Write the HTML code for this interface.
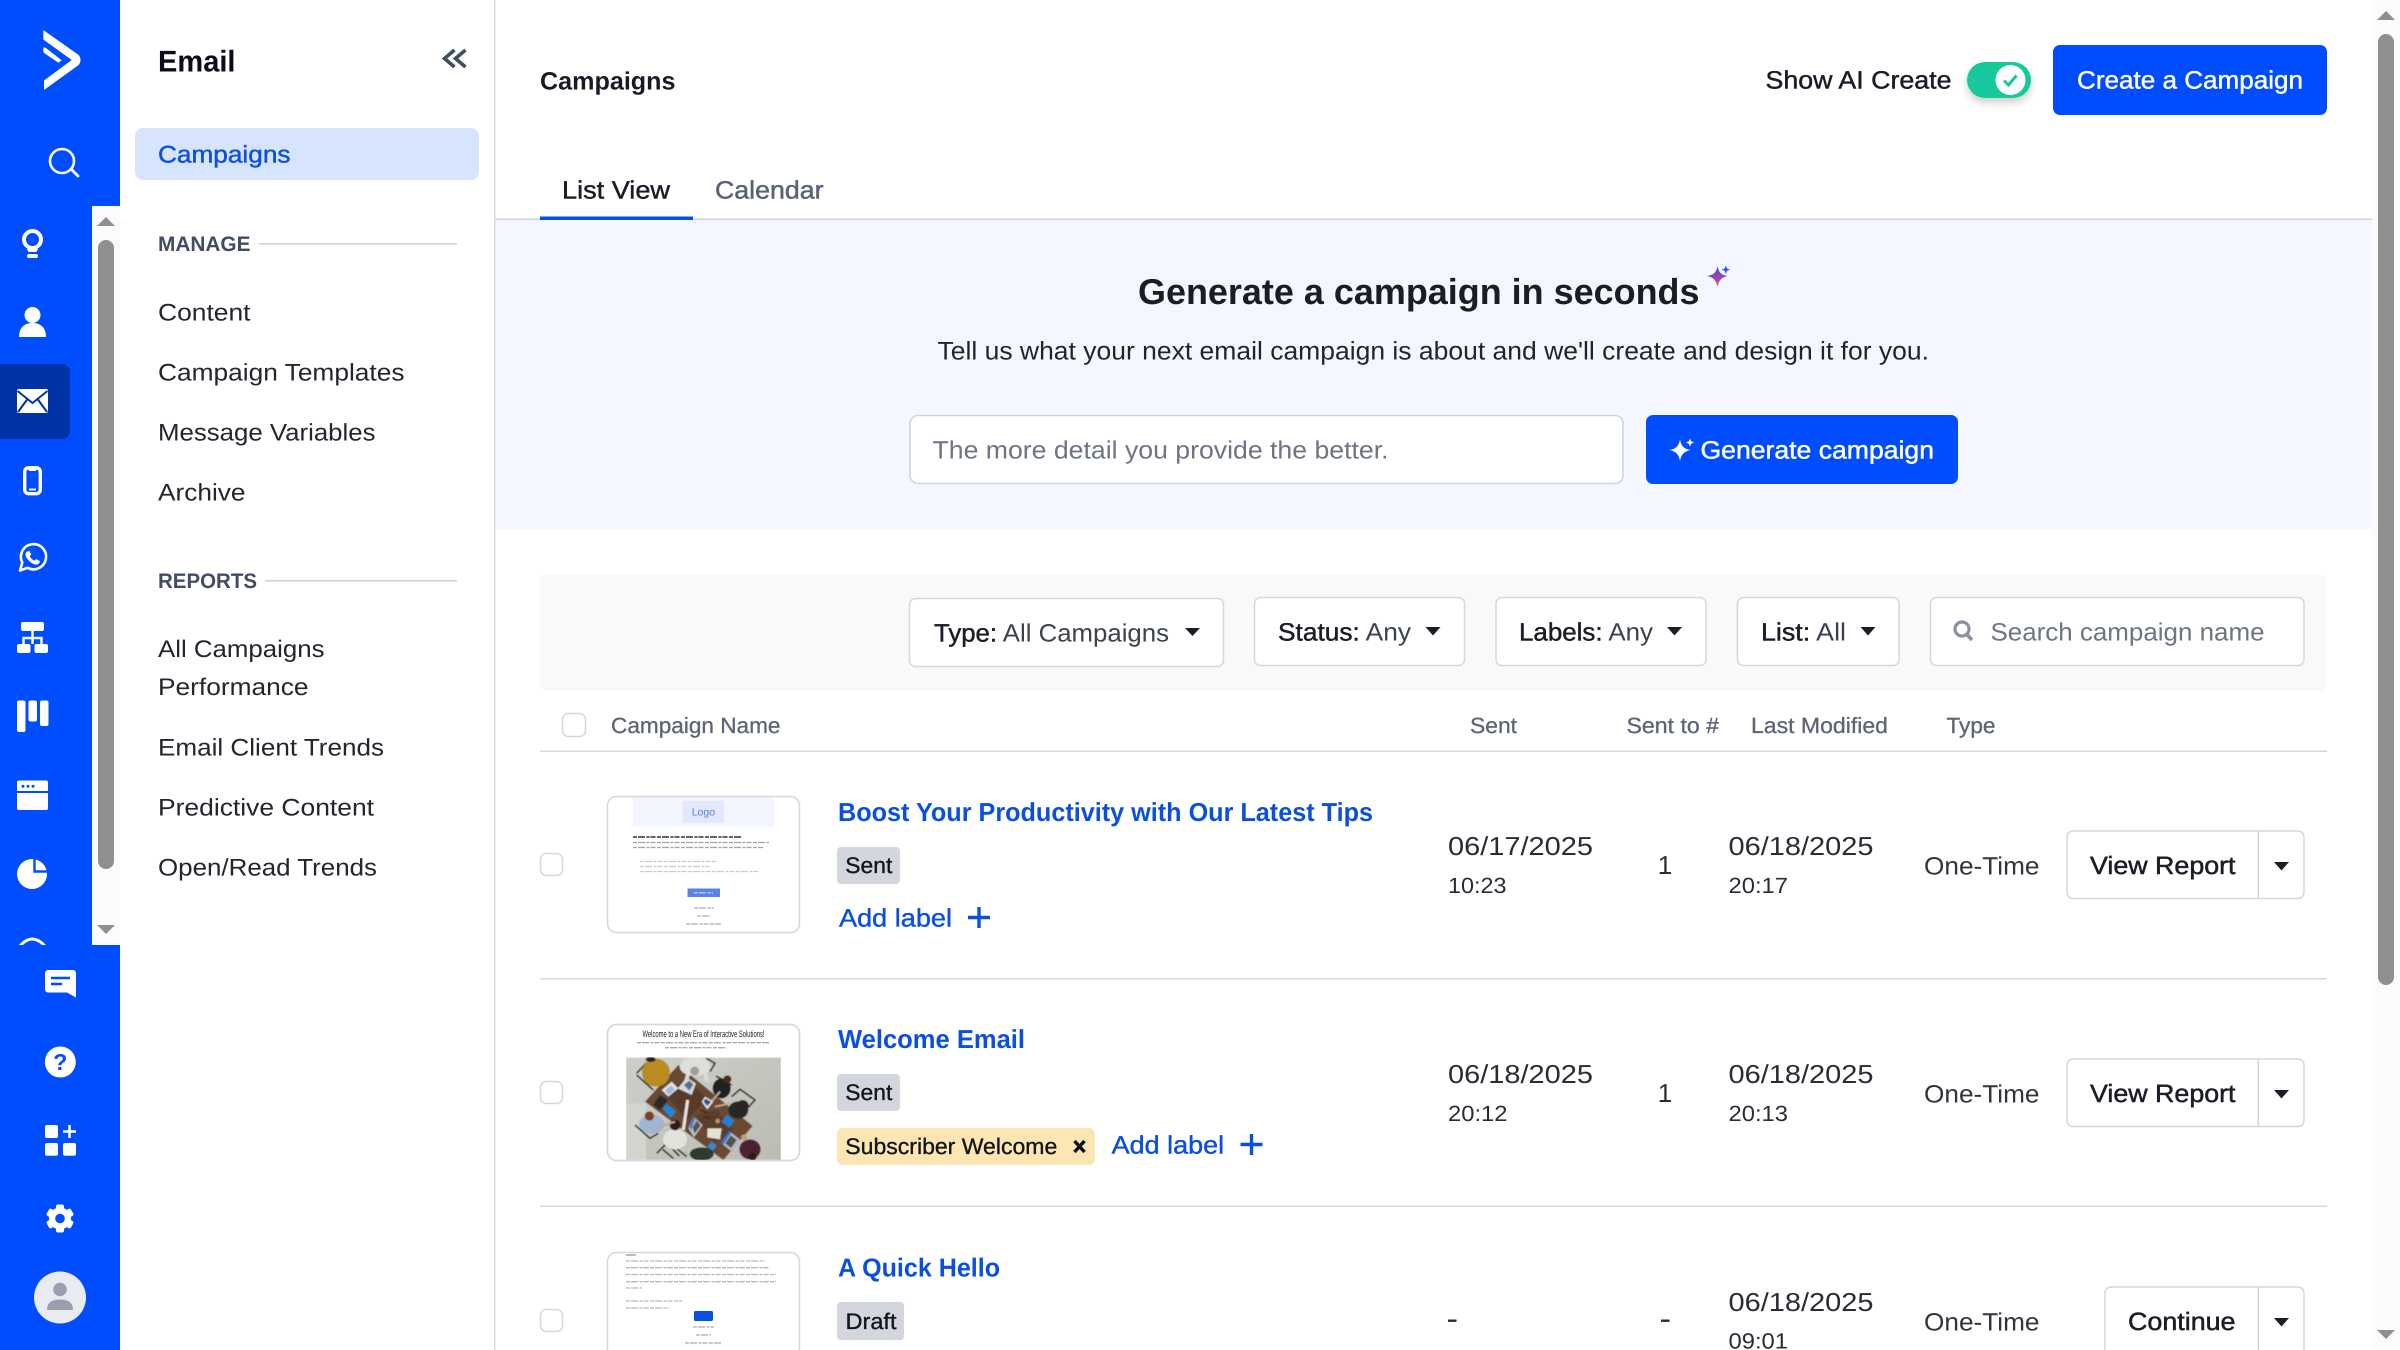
<!DOCTYPE html>
<html lang="en"><head><meta charset="utf-8"><title>Email Campaigns</title>
<style>
html,body{margin:0;padding:0;width:2400px;height:1350px;overflow:hidden;background:#fff}
svg{display:block}
text{font-family:"Liberation Sans",sans-serif;text-rendering:geometricPrecision;white-space:pre}
.m{stroke:currentColor;stroke-width:.45px}
.b{font-weight:700}
.nav{font-size:24px;fill:#24242f;color:#24242f}
.sec{font-size:21px;font-weight:700;fill:#424c63}
.th{font-size:22px;fill:#5d6476;color:#5d6476;stroke:currentColor;stroke-width:.3px}
.title{font-size:26px;font-weight:700;fill:#0a4fdf}
.add{font-size:25px;fill:#0a4fdf;color:#0a4fdf;stroke:currentColor;stroke-width:.4px}
.badge{font-size:22.5px;fill:#14141e;color:#14141e;stroke:currentColor;stroke-width:.35px}
.d{font-size:26px;fill:#2b2b36}
.t{font-size:22px;fill:#2b2b36}
.bt{font-size:25px;fill:#1c1c28;color:#1c1c28;stroke:currentColor;stroke-width:.5px}
.f{font-size:25px;fill:#1c1c28;color:#1c1c28;stroke:currentColor;stroke-width:.45px}
.fa{fill:#3c4150;color:#3c4150;stroke-width:0}
.ph{font-size:25px;fill:#6e7484}
.w{font-size:25px;fill:#fff;color:#fff;stroke:currentColor;stroke-width:.45px}
.tl{stroke:#555;stroke-width:1.3;stroke-dasharray:4 1 7 1.5 3 1 5 1.5;opacity:.42;fill:none}
</style></head><body>
<svg xmlns="http://www.w3.org/2000/svg" width="2400" height="1350" viewBox="0 0 2400 1350">
<defs>
<linearGradient id="sp" x1="0" y1="0" x2="0" y2="1"><stop offset="0" stop-color="#2a55e8"/><stop offset=".45" stop-color="#8a45b8"/><stop offset="1" stop-color="#f4487f"/></linearGradient>
<linearGradient id="con" x1="0" y1="0" x2="1" y2="1"><stop offset="0" stop-color="#cdd0ca"/><stop offset="1" stop-color="#bcbcb3"/></linearGradient>
<clipPath id="imgc"><rect x="18" y="22" width="465" height="308"/></clipPath>
<clipPath id="railc"><rect x="0" y="206" width="92" height="739"/></clipPath>
<filter id="soft" x="-5%" y="-5%" width="110%" height="110%"><feGaussianBlur stdDeviation="1.8"/></filter>
<filter id="sh" x="-30%" y="-30%" width="160%" height="180%"><feDropShadow dx="0" dy="5" stdDeviation="4" flood-color="#000" flood-opacity=".18"/></filter>
</defs>

<!-- main surfaces -->
<rect width="2400" height="1350" fill="#fff"/>
<rect x="495" y="220" width="1877" height="309" fill="#f4f7ff"/>
<rect x="494" y="218.5" width="1878" height="1.5" fill="#ced4e0"/>
<rect x="2372" y="0" width="28" height="1350" fill="#fbfbfb"/>
<rect x="494" y="0" width="1.5" height="1350" fill="#dcdcdc"/>

<!-- page scrollbar -->
<path d="M2386 11 L2395 20 H2377 Z" fill="#8f8f8f"/>
<rect x="2378" y="34" width="16" height="951" rx="8" fill="#8f8f8f"/>
<path d="M2386 1339 L2395 1330 H2377 Z" fill="#8f8f8f"/>

<!-- rail -->
<rect x="0" y="0" width="120" height="1350" fill="#004cff"/>
<rect x="92" y="206" width="28" height="739" fill="#fbfbfb"/>
<path d="M106 217 L115 226 H97 Z" fill="#8f8f8f"/>
<rect x="98" y="240" width="16" height="629" rx="8" fill="#8f8f8f"/>
<path d="M106 934 L115 925 H97 Z" fill="#8f8f8f"/>
<path d="M0 364 H62 a8 8 0 0 1 8 8 V431 a8 8 0 0 1 -8 8 H0 Z" fill="#0033a6"/>

<!-- logo -->
<path d="M43.3 30 L78 54.5 Q80.5 56.5 80.5 60 Q80.5 63.5 78 65.5 L44 90 V80.5 L71.7 60 L43.3 39.5 Z" fill="#fff"/>
<path d="M43.3 49 Q43.3 46.5 45.5 47.8 L61.7 60.3 L58.5 62.8 L45 53.6 Q43.3 52.5 43.3 51 Z" fill="#fff"/>
<!-- search -->
<circle cx="62" cy="161" r="12" fill="none" stroke="#fff" stroke-width="2.6"/>
<path d="M71 169 L78 176" stroke="#fff" stroke-width="2.8" stroke-linecap="round"/>
<!-- bulb -->
<circle cx="32.5" cy="239.5" r="8.5" fill="none" stroke="#fff" stroke-width="4"/>
<path d="M27 249 H38 L36.5 252 H28.5 Z" fill="#fff"/>
<rect x="27" y="254" width="11" height="4" rx="2" fill="#fff"/>
<!-- person -->
<circle cx="32.5" cy="315" r="8" fill="#fff"/>
<path d="M19 337 C19 327 25 323 32.5 323 C40 323 46 327 46 337 Z" fill="#fff"/>
<!-- mail -->
<rect x="17" y="389" width="31" height="24" rx="2" fill="#fff"/>
<path d="M17.5 391 L32.5 403 L47.5 391 M18 412 L27.5 399 M47 412 L37.5 399" fill="none" stroke="#0033a6" stroke-width="2"/>
<!-- phone -->
<rect x="24.7" y="467.7" width="15.6" height="26" rx="4" fill="none" stroke="#fff" stroke-width="3.4"/>
<path d="M28 467 H37 V469.5 L35.5 471 H29.5 L28 469.5 Z" fill="#fff"/><path d="M29 489.5 H36" stroke="#fff" stroke-width="2"/>
<!-- whatsapp -->
<path d="M20 570.5 L22.3 562.5 A12.6 12.6 0 1 1 27.5 567.8 Z" fill="none" stroke="#fff" stroke-width="2.6" stroke-linejoin="round"/>
<path d="M27 551.5 C25 553 25 556 27.5 559 C30 562.5 34 565 37 564.5 C39 564 40 562.5 39.8 561 L36 559 L34.5 560.6 C32.5 560 30.5 557.8 29.8 556 L31.3 554.6 L29.5 551 Z" fill="#fff"/>
<!-- org -->
<rect x="21" y="622" width="23" height="9" rx="2" fill="#fff"/>
<path d="M32.5 631 V644 M23.5 644 V638 H41.5 V644" fill="none" stroke="#fff" stroke-width="2.4"/>
<rect x="17" y="644" width="13.5" height="9" rx="2" fill="#fff"/><rect x="34.5" y="644" width="13.5" height="9" rx="2" fill="#fff"/>
<!-- kanban -->
<rect x="17" y="700.5" width="8.5" height="31.5" rx="2" fill="#fff"/><rect x="28.5" y="700.5" width="8.5" height="21" rx="2" fill="#fff"/><rect x="40" y="700.5" width="8.5" height="25.5" rx="2" fill="#fff"/>
<!-- window -->
<rect x="17" y="780.5" width="31" height="29.5" rx="2" fill="#fff"/>
<path d="M17 792 H48" stroke="#004cff" stroke-width="2"/>
<circle cx="23" cy="786.3" r="1.5" fill="#004cff"/><circle cx="28" cy="786.3" r="1.5" fill="#004cff"/><circle cx="33" cy="786.3" r="1.5" fill="#004cff"/>
<!-- pie -->
<circle cx="32" cy="874" r="15" fill="#fff"/>
<path d="M34.5 857 V871.5 H49" fill="none" stroke="#004cff" stroke-width="2.4"/>
<!-- clipped icon -->
<g clip-path="url(#railc)"><path d="M20 946 Q32 932 45 946" fill="none" stroke="#fff" stroke-width="3"/></g>
<!-- chat -->
<path d="M48 970 H73 a3 3 0 0 1 3 3 V997.5 L67 992.5 H48 a3 3 0 0 1 -3 -3 V973 a3 3 0 0 1 3 -3 Z" fill="#fff"/>
<path d="M51 978 H70 M51 984 H62" stroke="#004cff" stroke-width="2.6"/>
<!-- help -->
<circle cx="60.3" cy="1062" r="15.5" fill="#fff"/>
<text x="60.3" y="1070" text-anchor="middle" font-size="23" font-weight="700" fill="#004cff">?</text>
<!-- apps -->
<rect x="45" y="1125" width="13" height="13" rx="2" fill="#fff"/><rect x="45" y="1143" width="13" height="12.7" rx="2" fill="#fff"/><rect x="63" y="1143" width="13" height="12.7" rx="2" fill="#fff"/>
<path d="M69.5 1125 V1138 M63 1131.5 H76" stroke="#fff" stroke-width="2.6"/>
<!-- gear -->
<g fill="#fff">
<rect x="56" y="1204.5" width="8" height="28" rx="2"/><rect x="56" y="1204.5" width="8" height="28" rx="2" transform="rotate(60 60 1218.5)"/><rect x="56" y="1204.5" width="8" height="28" rx="2" transform="rotate(120 60 1218.5)"/>
</g>
<circle cx="60" cy="1218.5" r="8" fill="none" stroke="#fff" stroke-width="6"/>
<circle cx="60" cy="1218.5" r="4.8" fill="#004cff"/>
<!-- avatar -->
<circle cx="60" cy="1297.5" r="26" fill="#e9ebf1"/>
<circle cx="60" cy="1289.5" r="6.8" fill="#9a9fb0"/>
<path d="M47 1310 C47 1302 53 1299.5 60 1299.5 C67 1299.5 73 1302 73 1310 Z" fill="#9a9fb0"/>

<!-- sidebar -->
<text x="158" y="71.5" font-size="30" class="b" fill="#0b0b1f" textLength="77.5" lengthAdjust="spacingAndGlyphs">Email</text>
<path d="M454.5 50 L444.5 58.5 L454.5 67 M465.5 50 L455.5 58.5 L465.5 67" fill="none" stroke="#424c63" stroke-width="3.6"/>
<rect x="135" y="128" width="344" height="52" rx="8" fill="#d6e4fd"/>
<text x="158" y="162.5" font-size="24" fill="#0f50e0" style="color:#0f50e0" class="m" textLength="132.5" lengthAdjust="spacingAndGlyphs">Campaigns</text>
<text x="158" y="251" class="sec" textLength="92.5" lengthAdjust="spacingAndGlyphs">MANAGE</text>
<rect x="259" y="243" width="198" height="1.6" fill="#d0d2d6"/>
<text x="158" y="320.5" class="nav" textLength="92.5" lengthAdjust="spacingAndGlyphs">Content</text>
<text x="158" y="380.5" class="nav" textLength="246.5" lengthAdjust="spacingAndGlyphs">Campaign Templates</text>
<text x="158" y="440.5" class="nav" textLength="217.5" lengthAdjust="spacingAndGlyphs">Message Variables</text>
<text x="158" y="500.5" class="nav" textLength="87.5" lengthAdjust="spacingAndGlyphs">Archive</text>
<text x="158" y="588" class="sec" textLength="99" lengthAdjust="spacingAndGlyphs">REPORTS</text>
<rect x="265" y="580" width="192" height="1.6" fill="#d0d2d6"/>
<text x="158" y="657" class="nav" textLength="166.5" lengthAdjust="spacingAndGlyphs">All Campaigns</text>
<text x="158" y="695" class="nav" textLength="150.5" lengthAdjust="spacingAndGlyphs">Performance</text>
<text x="158" y="755.5" class="nav" textLength="226" lengthAdjust="spacingAndGlyphs">Email Client Trends</text>
<text x="158" y="815.5" class="nav" textLength="216" lengthAdjust="spacingAndGlyphs">Predictive Content</text>
<text x="158" y="875.5" class="nav" textLength="219" lengthAdjust="spacingAndGlyphs">Open/Read Trends</text>

<!-- header -->
<text x="540" y="89.5" font-size="25" class="b" fill="#1a1a26" textLength="135.5" lengthAdjust="spacingAndGlyphs">Campaigns</text>
<text x="1765.5" y="88.5" font-size="25" fill="#1c1c28" style="color:#1c1c28" class="m" textLength="186" lengthAdjust="spacingAndGlyphs">Show AI Create</text>
<rect x="1967" y="62" width="64" height="36" rx="18" fill="#19c89b" filter="url(#sh)"/>
<circle cx="2010.5" cy="80" r="15" fill="#fff"/>
<path d="M2004 80.5 L2008.5 85 L2016.5 75.5" fill="none" stroke="#19c89b" stroke-width="3"/>
<rect x="2053" y="45" width="274" height="70" rx="7" fill="#004cff"/>
<text x="2077" y="88.5" class="w" textLength="226" lengthAdjust="spacingAndGlyphs">Create a Campaign</text>

<!-- tabs -->
<text x="562" y="198.5" font-size="25" fill="#1c1c28" style="color:#1c1c28" class="m" textLength="108" lengthAdjust="spacingAndGlyphs">List View</text>
<text x="715" y="198.5" font-size="25" fill="#5a6275" style="color:#5a6275" class="m" textLength="108.5" lengthAdjust="spacingAndGlyphs">Calendar</text>
<rect x="540" y="216.5" width="153" height="3.5" fill="#0a4fdf"/>

<!-- hero -->
<text x="1138" y="304" font-size="36" class="b" fill="#1c1c26" textLength="561.5" lengthAdjust="spacingAndGlyphs">Generate a campaign in seconds</text>
<path d="M1717.5 266 C1718.5 272 1721 275 1727.5 276 C1721 277.5 1718.5 281 1717.5 287 C1716.5 281 1714 277.5 1707 276 C1714 275 1716.5 272 1717.5 266 Z" fill="url(#sp)"/>
<path d="M1725.8 265.5 L1727 268.5 L1730 269.6 L1727 270.8 L1725.8 274 L1724.6 270.8 L1721.5 269.6 L1724.6 268.5 Z" fill="#2a55e8"/>
<text x="937.5" y="359.5" font-size="25.5" fill="#23232e" textLength="991.5" lengthAdjust="spacingAndGlyphs">Tell us what your next email campaign is about and we'll create and design it for you.</text>
<rect x="910" y="415.5" width="713" height="68" rx="8" fill="#fff" stroke="#cfd3e0" stroke-width="1.6"/>
<text x="932.5" y="458.5" class="ph" textLength="456" lengthAdjust="spacingAndGlyphs">The more detail you provide the better.</text>
<rect x="1646" y="415" width="312" height="69" rx="7" fill="#004cff"/>
<path d="M1680 439 C1681 446 1684 449 1690.5 450 C1684 451.5 1681 454.5 1680 461 C1679 454.5 1676 451.5 1669.5 450 C1676 449 1679 446 1680 439 Z" fill="#fff"/>
<path d="M1690 438.5 L1691.2 441.3 L1694 442.5 L1691.2 443.7 L1690 446.5 L1688.8 443.7 L1686 442.5 L1688.8 441.3 Z" fill="#fff"/>
<text x="1700.5" y="458.5" class="w" textLength="233.5" lengthAdjust="spacingAndGlyphs">Generate campaign</text>

<!-- filter bar -->
<rect x="540" y="574" width="1787" height="117" rx="8" fill="#f9f9fa"/>
<rect x="909.5" y="598.5" width="314" height="68" rx="6" fill="#fff" stroke="#d4d7dd" stroke-width="1.5"/>
<rect x="1254.5" y="597.5" width="210" height="68" rx="6" fill="#fff" stroke="#d4d7dd" stroke-width="1.5"/>
<rect x="1496" y="597.5" width="210" height="68" rx="6" fill="#fff" stroke="#d4d7dd" stroke-width="1.5"/>
<rect x="1737.5" y="597.5" width="161.5" height="68" rx="6" fill="#fff" stroke="#d4d7dd" stroke-width="1.5"/>
<rect x="1930.5" y="597.5" width="373.5" height="68" rx="6" fill="#fff" stroke="#d4d7dd" stroke-width="1.5"/>
<text x="934" y="641.5" class="f" textLength="235" lengthAdjust="spacingAndGlyphs">Type: <tspan class="fa">All Campaigns</tspan></text>
<path d="M1185 628 H1200 L1192.5 636 Z" fill="#1c1c28"/>
<text x="1278" y="640.5" class="f" textLength="133" lengthAdjust="spacingAndGlyphs">Status: <tspan class="fa">Any</tspan></text>
<path d="M1425.5 627 H1440.5 L1433 635.5 Z" fill="#1c1c28"/>
<text x="1519" y="640.5" class="f" textLength="134" lengthAdjust="spacingAndGlyphs">Labels: <tspan class="fa">Any</tspan></text>
<path d="M1667 627 H1682 L1674.5 635.5 Z" fill="#1c1c28"/>
<text x="1761" y="640.5" class="f" textLength="85" lengthAdjust="spacingAndGlyphs">List: <tspan class="fa">All</tspan></text>
<path d="M1860.5 627 H1875.5 L1868 635.5 Z" fill="#1c1c28"/>
<circle cx="1962" cy="629" r="7" fill="none" stroke="#8a90a0" stroke-width="3.2"/>
<path d="M1967 634.5 L1972 640" stroke="#8a90a0" stroke-width="3.6"/>
<text x="1990.5" y="640.5" class="ph" textLength="274" lengthAdjust="spacingAndGlyphs">Search campaign name</text>

<!-- table head -->
<rect x="562.5" y="713.5" width="23" height="23" rx="6" fill="#fff" stroke="#d4d7dd" stroke-width="1.5"/>
<text x="611" y="733" class="th" textLength="169.5" lengthAdjust="spacingAndGlyphs">Campaign Name</text>
<text x="1470" y="733" class="th" textLength="47" lengthAdjust="spacingAndGlyphs">Sent</text>
<text x="1626.5" y="733" class="th" textLength="92.5" lengthAdjust="spacingAndGlyphs">Sent to #</text>
<text x="1751" y="733" class="th" textLength="137" lengthAdjust="spacingAndGlyphs">Last Modified</text>
<text x="1946.5" y="733" class="th" textLength="49" lengthAdjust="spacingAndGlyphs">Type</text>
<rect x="540" y="750.5" width="1787" height="1.5" fill="#d6d8dc"/>
<rect x="540" y="978" width="1787" height="1.5" fill="#d6d8dc"/>
<rect x="540" y="1205.5" width="1787" height="1.5" fill="#d6d8dc"/>

<!-- row checkboxes -->
<rect x="540.5" y="853.5" width="22" height="22" rx="6" fill="#fff" stroke="#d4d7dd" stroke-width="1.5"/>
<rect x="540.5" y="1081.5" width="22" height="22" rx="6" fill="#fff" stroke="#d4d7dd" stroke-width="1.5"/>
<rect x="540.5" y="1309.5" width="22" height="22" rx="6" fill="#fff" stroke="#d4d7dd" stroke-width="1.5"/>

<!-- thumb 1 -->
<rect x="607.5" y="796.5" width="192" height="136" rx="9" fill="#fff" stroke="#d5d7da" stroke-width="1.5"/>
<rect x="632.7" y="797.5" width="141.5" height="29" fill="#f2f5fd"/>
<rect x="682.7" y="800.7" width="41.3" height="22" fill="#e0e8fa"/>
<text x="703.4" y="815.5" text-anchor="middle" font-size="10.5" fill="#5b7fdc">Logo</text>
<path class="tl" style="stroke-width:1.8;opacity:.8;stroke:#222" d="M633 837 H742"/>
<path class="tl" style="opacity:.55" d="M633 842.5 H769 M633 847.5 H763"/>
<path class="tl" style="opacity:.3" d="M640 861.5 H717 M640 866.5 H709 M640 871.5 H758"/>
<rect x="687.5" y="888.5" width="32.5" height="8.5" fill="#5c82e6"/>
<path class="tl" style="stroke:#fff;opacity:.7;stroke-width:1.2" d="M694 892.8 H713"/>
<path class="tl" style="stroke-width:1.2;opacity:.5" d="M694 908 H714 M697 916 H711 M686 924 H721"/>

<!-- thumb 2 -->
<rect x="607.5" y="1024.5" width="192" height="136" rx="9" fill="#fff" stroke="#d5d7da" stroke-width="1.5"/>
<text x="642.5" y="1037" font-size="9.4" fill="#222" textLength="122" lengthAdjust="spacingAndGlyphs">Welcome to a New Era of Interactive Solutions!</text>
<path class="tl" style="stroke-width:1.3;opacity:.5" d="M637 1042.7 H770 M665 1047.7 H727"/>
<g transform="translate(620 1050) scale(.33333)" clip-path="url(#imgc)">
<g filter="url(#soft)">
<rect x="18" y="22" width="465" height="308" fill="url(#con)"/>
<rect x="18" y="160" width="60" height="170" fill="#d3d5cf"/>
<path d="M50 70 L80 38 M50 75 L100 120 M260 25 L285 40 L270 65 M288 78 L335 105 M335 140 L360 118 L405 150 L385 172 M45 225 L90 265 L115 250 M110 310 L145 275 L200 320 M128 298 L160 325 M146 285 L178 318" stroke="#2b2723" stroke-width="5" fill="none"/>
<polygon points="75,155 175,45 398,228 310,330" fill="#694833"/>
<polygon points="140,135 195,85 262,145 200,210" fill="#573a29"/>
<polygon points="230,195 290,180 340,240 280,280" fill="#5a3d2b"/>
<ellipse cx="108" cy="68" rx="42" ry="42" fill="#b98c22"/>
<ellipse cx="92" cy="28" rx="15" ry="8" fill="#2e241a"/>
<ellipse cx="225" cy="50" rx="46" ry="28" fill="#dededb"/>
<path d="M205 70 L190 120 M255 70 L262 95" stroke="#dededb" stroke-width="11"/>
<circle cx="224" cy="63" r="13" fill="#a59d92"/>
<ellipse cx="305" cy="115" rx="27" ry="30" fill="#1f2024"/>
<circle cx="322" cy="88" r="12" fill="#4a2c1c"/>
<ellipse cx="355" cy="180" rx="30" ry="26" fill="#242a28"/>
<circle cx="368" cy="168" r="18" fill="#2e2420"/>
<ellipse cx="390" cy="298" rx="32" ry="30" fill="#4c2230"/>
<circle cx="398" cy="320" r="12" fill="#241c1c"/>
<circle cx="372" cy="262" r="9" fill="#c89a80"/>
<ellipse cx="245" cy="312" rx="36" ry="20" fill="#2e3a2e"/>
<ellipse cx="165" cy="268" rx="36" ry="30" fill="#e4e2dc"/>
<circle cx="165" cy="225" r="16" fill="#2c1c14"/>
<path d="M190 240 L203 150" stroke="#e8e4de" stroke-width="9"/>
<ellipse cx="95" cy="222" rx="38" ry="28" fill="#9fb6d4"/>
<circle cx="88" cy="198" r="14" fill="#7e3f28"/>
<path d="M120 230 L165 215 M300 125 L270 160 M330 160 L285 170" stroke="#c8a58c" stroke-width="6"/>
<polygon points="125,120 155,95 175,115 145,140" fill="#dfe2e6"/>
<polygon points="135,123 152,106 165,118 147,134" fill="#9db9dc"/>
<polygon points="173,115 200,82 228,100 215,135" fill="#d4d7dc"/>
<polygon points="192,105 208,92 220,103 208,122" fill="#56708c"/>
<polygon points="100,165 120,135 145,150 120,180" fill="#2a2a2a"/>
<polygon points="128,175 140,162 168,185 152,203" fill="#1c86dc"/>
<polygon points="245,155 255,140 280,155 262,178" fill="#e2e3e6"/>
<polygon points="250,154 257,146 273,156 262,168" fill="#3a4f80"/>
<polygon points="205,235 220,200 248,225 222,262" fill="#b8bcc2"/>
<polygon points="208,232 220,200 226,205 214,238" fill="#3f78d8"/>
<polygon points="218,232 230,212 242,226 224,250" fill="#555"/>
<polygon points="305,215 320,195 343,212 327,232" fill="#1a82dc"/>
<polygon points="305,280 330,245 362,270 335,305" fill="#b4b8be"/>
<polygon points="303,278 328,243 334,248 310,284" fill="#2f74d4"/>
<polygon points="316,280 332,256 350,270 333,294" fill="#505550"/>
<polygon points="262,235 305,235 300,268 262,262" fill="#e8e2d2"/>
<polygon points="263,290 275,275 290,287 278,302" fill="#2d8ae0"/>
<circle cx="293" cy="213" r="7" fill="#b8945e"/>
<path d="M240 180 L262 188 M255 200 L270 205" stroke="#1e1a16" stroke-width="3"/>
</g></g>
<rect x="607.5" y="1024.5" width="192" height="136" rx="9" fill="none" stroke="#d5d7da" stroke-width="1.5"/>

<!-- thumb 3 -->
<rect x="607.5" y="1252.5" width="192" height="120" rx="9" fill="#fff" stroke="#d5d7da" stroke-width="1.5"/>
<path class="tl" style="stroke-dasharray:none;opacity:.6" d="M626 1255 H636"/>
<path class="tl" d="M626 1261 H765 M626 1267.7 H770 M626 1274.5 H776 M626 1281.7 H776 M626 1288 H642 M626 1301 H682 M626 1308 H669"/>
<rect x="694" y="1311" width="19" height="10" rx="1.5" fill="#0c50e0"/>
<path class="tl" style="stroke-width:1.2;opacity:.5" d="M693 1327 H714 M696 1335 H711 M685 1343 H722"/>

<!-- row 1 -->
<text x="838" y="821" class="title" textLength="535" lengthAdjust="spacingAndGlyphs">Boost Your Productivity with Our Latest Tips</text>
<rect x="837" y="847" width="63" height="37" rx="4" fill="#d3d6dc"/>
<text x="845.3" y="873" class="badge" textLength="47" lengthAdjust="spacingAndGlyphs">Sent</text>
<text x="839" y="926.5" class="add" textLength="113" lengthAdjust="spacingAndGlyphs">Add label</text>
<path d="M979 907 V928 M968 917.5 H990" stroke="#0a4fdf" stroke-width="3.4"/>
<text x="1448" y="855" class="d" textLength="145" lengthAdjust="spacingAndGlyphs">06/17/2025</text>
<text x="1448" y="893" class="t" textLength="58.5" lengthAdjust="spacingAndGlyphs">10:23</text>
<text x="1665" y="874" class="d" text-anchor="middle">1</text>
<text x="1728.5" y="855" class="d" textLength="145" lengthAdjust="spacingAndGlyphs">06/18/2025</text>
<text x="1728.5" y="893" class="t" textLength="59.5" lengthAdjust="spacingAndGlyphs">20:17</text>
<text x="1924" y="874.5" font-size="25" fill="#33333e" textLength="115.5" lengthAdjust="spacingAndGlyphs">One-Time</text>
<rect x="2067" y="831" width="237" height="67.5" rx="6" fill="#fff" stroke="#d4d7dd" stroke-width="1.5"/>
<rect x="2257.5" y="831" width="1.5" height="67.5" fill="#d4d7dd"/>
<text x="2090" y="874" class="bt" textLength="145.5" lengthAdjust="spacingAndGlyphs">View Report</text>
<path d="M2274 862 H2289 L2281.5 870.5 Z" fill="#1c1c28"/>

<!-- row 2 -->
<text x="838" y="1048" class="title" textLength="187" lengthAdjust="spacingAndGlyphs">Welcome Email</text>
<rect x="837" y="1074" width="63" height="37" rx="4" fill="#d3d6dc"/>
<text x="845.3" y="1100" class="badge" textLength="47" lengthAdjust="spacingAndGlyphs">Sent</text>
<rect x="837" y="1128" width="258" height="37" rx="6" fill="#fde6b2"/>
<text x="845.3" y="1154" class="badge" textLength="212" lengthAdjust="spacingAndGlyphs">Subscriber Welcome</text>
<path d="M1074.5 1141 L1084.5 1152 M1084.5 1141 L1074.5 1152" stroke="#0c0c14" stroke-width="3.4"/>
<text x="1111.6" y="1153.5" class="add" textLength="112.5" lengthAdjust="spacingAndGlyphs">Add label</text>
<path d="M1251.5 1134 V1155 M1240.5 1144.5 H1262.5" stroke="#0a4fdf" stroke-width="3.4"/>
<text x="1448" y="1083" class="d" textLength="145" lengthAdjust="spacingAndGlyphs">06/18/2025</text>
<text x="1448" y="1121" class="t" textLength="59.5" lengthAdjust="spacingAndGlyphs">20:12</text>
<text x="1665" y="1102" class="d" text-anchor="middle">1</text>
<text x="1728.5" y="1083" class="d" textLength="145" lengthAdjust="spacingAndGlyphs">06/18/2025</text>
<text x="1728.5" y="1121" class="t" textLength="59.5" lengthAdjust="spacingAndGlyphs">20:13</text>
<text x="1924" y="1102.5" font-size="25" fill="#33333e" textLength="115.5" lengthAdjust="spacingAndGlyphs">One-Time</text>
<rect x="2067" y="1059" width="237" height="67.5" rx="6" fill="#fff" stroke="#d4d7dd" stroke-width="1.5"/>
<rect x="2257.5" y="1059" width="1.5" height="67.5" fill="#d4d7dd"/>
<text x="2090" y="1102" class="bt" textLength="145.5" lengthAdjust="spacingAndGlyphs">View Report</text>
<path d="M2274 1090 H2289 L2281.5 1098.5 Z" fill="#1c1c28"/>

<!-- row 3 -->
<text x="838" y="1276.5" class="title" textLength="162" lengthAdjust="spacingAndGlyphs">A Quick Hello</text>
<rect x="837" y="1302" width="67" height="38" rx="4" fill="#d3d6dc"/>
<text x="845.5" y="1329" class="badge" textLength="51" lengthAdjust="spacingAndGlyphs">Draft</text>
<rect x="1448" y="1319.5" width="8.5" height="2.4" fill="#2b2b36"/>
<rect x="1661" y="1319.5" width="8.5" height="2.4" fill="#2b2b36"/>
<text x="1728.5" y="1311" class="d" textLength="145" lengthAdjust="spacingAndGlyphs">06/18/2025</text>
<text x="1728.5" y="1348.5" class="t" textLength="59.5" lengthAdjust="spacingAndGlyphs">09:01</text>
<text x="1924" y="1330.5" font-size="25" fill="#33333e" textLength="115.5" lengthAdjust="spacingAndGlyphs">One-Time</text>
<rect x="2105" y="1287" width="199" height="80" rx="6" fill="#fff" stroke="#d4d7dd" stroke-width="1.5"/>
<rect x="2257.5" y="1287" width="1.5" height="63" fill="#d4d7dd"/>
<text x="2128" y="1330" class="bt" textLength="107.5" lengthAdjust="spacingAndGlyphs">Continue</text>
<path d="M2274 1318 H2289 L2281.5 1326.5 Z" fill="#1c1c28"/>
</svg>
</body></html>
